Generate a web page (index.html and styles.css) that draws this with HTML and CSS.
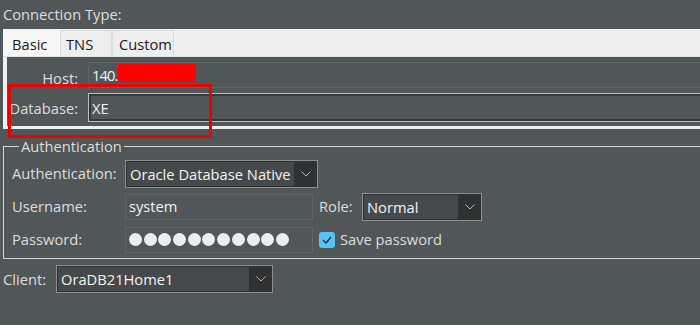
FILE: index.html
```html
<!DOCTYPE html>
<html>
<head>
<meta charset="utf-8">
<link rel="stylesheet" href="styles.css">
</head>
<body>
<div class="page">
  <div class="title">Connection Type:</div>
  <div class="tabpanel">
    <div class="tabs">
      <div class="tab active">Basic</div>
      <div class="tab">TNS</div>
      <div class="tab">Custom</div>
    </div>
    <div class="tabbody">
      <div class="frow host">
        <div class="flabel">Host:</div>
        <div class="field"><span class="ip">140.</span><span class="redact"></span></div>
      </div>
      <div class="frow db">
        <div class="flabel">Database:</div>
        <div class="field focus"><span>XE</span></div>
      </div>
    </div>
  </div>
  <div class="highlight"></div>

  <fieldset class="auth">
    <legend>Authentication</legend>
    <div class="arow">
      <div class="alabel">Authentication:</div>
      <div class="combo wauth">
        <div class="ctext">Oracle Database Native</div>
        <div class="cbtn"><svg width="10" height="6" viewBox="0 0 10 6"><polyline points="0.5,0.5 5,5 9.5,0.5" fill="none" stroke="#b4b4b4" stroke-width="1"/></svg></div>
      </div>
    </div>
    <div class="arow">
      <div class="alabel">Username:</div>
      <div class="tfield">system</div>
      <div class="rlabel">Role:</div>
      <div class="combo wrole">
        <div class="ctext">Normal</div>
        <div class="cbtn"><svg width="10" height="6" viewBox="0 0 10 6"><polyline points="0.5,0.5 5,5 9.5,0.5" fill="none" stroke="#b4b4b4" stroke-width="1"/></svg></div>
      </div>
    </div>
    <div class="arow">
      <div class="alabel">Password:</div>
      <div class="tfield dots">
        <i></i><i></i><i></i><i></i><i></i><i></i><i></i><i></i><i></i><i></i><i></i>
      </div>
      <div class="check"><svg width="10" height="8" viewBox="0 0 10 8"><polyline points="1,4 4,7 9,1" fill="none" stroke="#1e2b33" stroke-width="1.3"/></svg></div>
      <div class="clabel">Save password</div>
    </div>
  </fieldset>

  <div class="crow">
    <div class="clientlabel">Client:</div>
    <div class="combo wclient">
      <div class="ctext">OraDB21Home1</div>
      <div class="cbtn"><svg width="10" height="6" viewBox="0 0 10 6"><polyline points="0.5,0.5 5,5 9.5,0.5" fill="none" stroke="#b4b4b4" stroke-width="1"/></svg></div>
    </div>
  </div>
</div>
</body>
</html>
```
FILE: styles.css
```css
html, body {
  margin: 0;
  padding: 0;
  background: #515658;
  overflow: hidden;
}
body {
  width: 700px;
  height: 325px;
  font-family: "Open Sans", "Noto Sans", sans-serif;
  font-size: 14.7px;
  color: #dddddd;
}
.page {
  position: relative;
  width: 700px;
  height: 325px;
  overflow: hidden;
}
.title {
  height: 29px;
  line-height: 29px;
  padding-left: 3px;
  box-sizing: border-box;
}
.tabpanel {
  margin-left: 3px;
  background: #efefef;
  padding: 0 0 3px 4px;
}
.tabs {
  display: flex;
  height: 28px;
  margin-left: -4px;
  padding-top: 1px;
  box-sizing: border-box;
  border-bottom: 1px solid #e2e2e2;
}
.tab {
  color: #1a1a1a;
  line-height: 26px;
  box-sizing: border-box;
  border: 1px solid #dcdcdc;
  border-bottom: none;
  background: #eeeeee;
}
.tab.active {
  width: 57px;
  padding-left: 8px;
  background: #f6f6f6;
  border-color: #f6f6f6;
}
.tab:nth-child(2) { width: 52px; padding-left: 5px; }
.tab:nth-child(3) { width: 62px; padding-left: 6px; }
.tabbody {
  background: #515658;
  padding: 5px 0 5px 0;
  height: 69px;
  box-sizing: border-box;
}
.frow {
  display: flex;
  align-items: center;
}
.frow.db { margin-top: 5px; }
.flabel {
  width: 71px;
  text-align: right;
  padding-right: 10px;
  box-sizing: content-box;
}
.field {
  flex: 1;
  display: flex;
  align-items: center;
  box-sizing: border-box;
  color: #f2f2f2;
  padding-left: 3px;
}
.frow.host .field {
  height: 26px;
  border: 1px solid #5f6365;
  border-right: none;
}
.frow.host .flabel { padding-top: 6px; }
.ip { letter-spacing: -0.9px; }
.redact {
  display: inline-block;
  width: 78px;
  height: 18px;
  background: #ff0000;
  margin-top: -5px;
  margin-left: 1px;
}
.field.focus {
  height: 29px;
  border: 1px solid #bdbdbd;
  border-right: none;
  box-shadow: inset 0 2px 0 0 #36393b, inset 0 -2px 0 0 #36393b, inset 2px 0 0 0 #36393b;
  padding-left: 3px;
}
.highlight {
  position: absolute;
  left: 8px;
  top: 84px;
  width: 204px;
  height: 54px;
  box-sizing: border-box;
  border: 3px solid #ee0000;
}
.auth {
  margin: 9px 0 0 3px;
  padding: 5px 0 5px 8px;
  border: 1px solid #d4d4d4;
  border-right: none;
  width: 697px;
  box-sizing: border-box;
  height: 121px;
  min-width: 0;
}
.auth legend {
  padding: 0 2px;
  margin-left: 7px;
  color: #dddddd;
  line-height: 17px;
}
.arow {
  display: flex;
  align-items: center;
  height: 27px;
  margin-bottom: 6px;
  line-height: 20px;
}
.arow .alabel, .arow .rlabel, .arow .clabel { margin-top: -1px; }
.alabel { width: 113px; }
.combo {
  display: flex;
  box-sizing: border-box;
  height: 28px;
  border: 1px solid #8e8e8e;
  background: #2f3132;
}
.ctext {
  flex: 1;
  background: #46494b;
  border: 1px solid #2e3031;
  color: #f2f2f2;
  line-height: 24px;
  padding-left: 3px;
  white-space: nowrap;
  overflow: hidden;
}
.cbtn {
  width: 22px;
  display: flex;
  align-items: center;
  justify-content: center;
}
.wauth { width: 193px; }
.wrole { width: 120px; }
.wclient { width: 217px; }
.tfield {
  width: 188px;
  height: 26px;
  box-sizing: border-box;
  border: 1px solid #5f6365;
  color: #f2f2f2;
  padding-left: 3px;
  line-height: 22px;
}
.rlabel { margin-left: 6px; width: 43px; }
.dots {
  display: flex;
  align-items: center;
  gap: 1.7px;
}
.dots i {
  display: block;
  width: 13px;
  height: 13px;
  border-radius: 50%;
  background: #ededed;
}
.check {
  margin-left: 6px;
  width: 16px;
  height: 16px;
  border-radius: 3px;
  background: #55c3f5;
  display: flex;
  align-items: center;
  justify-content: center;
}
.clabel { margin-left: 5px; }
.crow {
  display: flex;
  align-items: center;
  margin-top: 6px;
  padding-left: 3px;
}
.clientlabel { width: 53px; }
```
